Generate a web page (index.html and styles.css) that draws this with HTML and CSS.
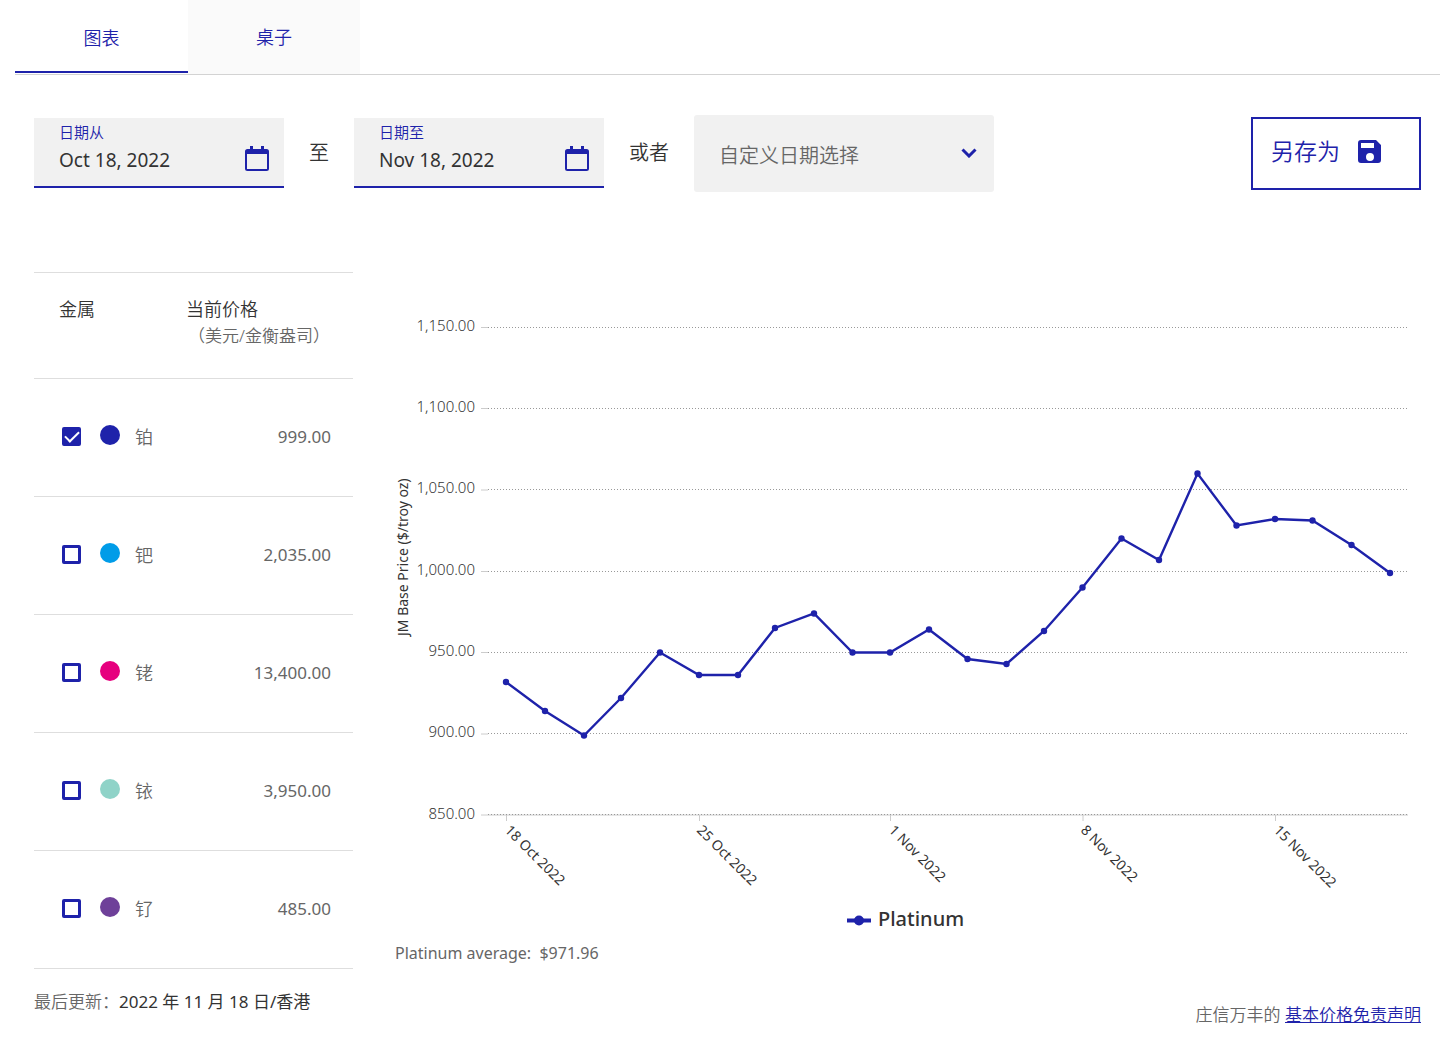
FILE: index.html
```html
<!DOCTYPE html>
<html lang="zh-CN">
<head>
<meta charset="utf-8">
<meta name="viewport" content="width=device-width, initial-scale=1">
<title>贵金属价格图表</title>
<link rel="stylesheet" href="styles.css">
</head>
<body>
<nav class="tabs">
  <button type="button" class="tab tab-active">图表</button>
  <button type="button" class="tab">桌子</button>
</nav>
<main class="page">
  <form class="filters">
    <div class="date-field">
      <div class="date-text">
        <label for="from">日期从</label>
        <input id="from" type="text" value="Oct 18, 2022">
      </div>
      <svg class="calendar" viewBox="0 0 24 26" aria-hidden="true"><path fill-rule="evenodd" d="M5 0h3v3h8V0h3v3h2.500q2.500 0 2.500 2.500v17q0 2.500-2.500 2.500h-19Q0 25 0 22.500v-17Q0 3 2.500 3H5zM2 8v15h20V8z"/></svg>
    </div>
    <span class="joiner">至</span>
    <div class="date-field">
      <div class="date-text">
        <label for="to">日期至</label>
        <input id="to" type="text" value="Nov 18, 2022">
      </div>
      <svg class="calendar" viewBox="0 0 24 26" aria-hidden="true"><path fill-rule="evenodd" d="M5 0h3v3h8V0h3v3h2.500q2.500 0 2.500 2.500v17q0 2.500-2.500 2.500h-19Q0 25 0 22.500v-17Q0 3 2.500 3H5zM2 8v15h20V8z"/></svg>
    </div>
    <span class="joiner">或者</span>
    <div class="range">
      <select class="range-select" aria-label="自定义日期选择">
        <option>自定义日期选择</option>
      </select>
      <svg class="chevron" viewBox="0 0 16 10" aria-hidden="true"><path d="M1.500 1.500l6.500 6.500 6.500-6.500"/></svg>
    </div>
    <button type="button" class="save">另存为
      <svg class="disk" viewBox="0 0 24 24" aria-hidden="true"><path fill-rule="evenodd" d="M3 1h15l5 5v15q0 3-3 3H3q-3 0-3-3V4q0-3 3-3zM3 4v5h13V4zM12 14a4 4 0 1 0 0 8a4 4 0 1 0 0-8z"/></svg>
    </button>
  </form>

  <div class="content">
    <section class="side">
      <table class="prices">
        <thead>
          <tr>
            <th class="metal-head">金属</th>
            <th class="price-head">当前价格<span class="unit">（美元/金衡盎司）</span></th>
          </tr>
        </thead>
        <tbody>
          <tr><td><label class="metal"><input type="checkbox" checked><span class="dot platinum"></span>铂</label></td><td class="price">999.00</td></tr>
          <tr><td><label class="metal"><input type="checkbox"><span class="dot palladium"></span>钯</label></td><td class="price">2,035.00</td></tr>
          <tr><td><label class="metal"><input type="checkbox"><span class="dot rhodium"></span>铑</label></td><td class="price">13,400.00</td></tr>
          <tr><td><label class="metal"><input type="checkbox"><span class="dot iridium"></span>铱</label></td><td class="price">3,950.00</td></tr>
          <tr><td><label class="metal"><input type="checkbox"><span class="dot ruthenium"></span>钌</label></td><td class="price">485.00</td></tr>
        </tbody>
      </table>
      <p class="updated">最后更新：<span class="updated-date">2022 年 11 月 18 日/香港</span></p>
    </section>

    <section class="chart-area">
      <svg class="chart" viewBox="0 0 1026 640" role="img" aria-label="Platinum">
        <defs>
          <marker id="point" markerUnits="userSpaceOnUse" markerWidth="8" markerHeight="8" refX="4" refY="4"><circle class="point" cx="4" cy="4" r="3.200"/></marker>
        </defs>
        <path class="tick" d="M86 27.500h7M86 108.500h7M86 190h7M86 271.500h7M86 352.500h7M86 434h7M86 515h927M111.500 515v6M304.500 515v6M495.500 515v6M688 515v6M880.500 515v6"/>
        <path class="grid" d="M93 27.500h920M93 108.500h920M93 189.500h920M93 271.500h920M93 352.500h920M93 433.500h920M93 514.500h920"/>
        <g class="y-labels">
          <text x="80" y="31">1,150.00</text>
          <text x="80" y="112">1,100.00</text>
          <text x="80" y="193">1,050.00</text>
          <text x="80" y="275">1,000.00</text>
          <text x="80" y="356">950.00</text>
          <text x="80" y="437">900.00</text>
          <text x="80" y="519">850.00</text>
        </g>
        <text class="axis-title" transform="translate(13 336) rotate(-90)">JM Base Price ($/troy oz)</text>
        <g class="x-labels">
          <text transform="translate(109 531) rotate(45)">18 Oct 2022</text>
          <text transform="translate(301 531) rotate(45)">25 Oct 2022</text>
          <text transform="translate(493 531) rotate(45)">1 Nov 2022</text>
          <text transform="translate(685 531) rotate(45)">8 Nov 2022</text>
          <text transform="translate(878 531) rotate(45)">15 Nov 2022</text>
        </g>
        <polyline class="series" points="111,382 150,411 189,435.500 226,398 265,352.500 304,375 343,375 380,328 419,313.500 457.500,352.500 495,352.500 534,329.500 572.500,359 611.500,364 649,331 687.500,287.500 726.500,238.500 764,260 802.500,173.500 841.500,225.500 880,219 917.500,220.500 956.500,245 995,273"/>
        <path class="legend-line" d="M452 620.500h24"/>
        <circle class="point" cx="464" cy="620.500" r="5"/>
        <text class="legend" x="483" y="626">Platinum</text>
      </svg>
      <p class="average">Platinum average:&nbsp; $971.96</p>
      <p class="disclaimer">庄信万丰的 <a href="#">基本价格免责声明</a></p>
    </section>
  </div>
</main>
</body>
</html>
```
FILE: styles.css
```css
:root {
  --blue: #1e22aa;
  --ink: #333;
  --grey: #666;
  --field: #f1f1f1;
  --rule: #dedede;
}

* {
  box-sizing: border-box;
}

body {
  margin: 0;
  background: #fff;
  color: var(--grey);
  font: 350 18px/26px "Noto Sans", "Noto Sans CJK SC", sans-serif;
}

button,
input,
select {
  font: inherit;
}

p {
  margin: 0;
}

.tabs {
  display: flex;
  margin: 0 4px 0 15px;
  border-bottom: 1px solid #d3d3d3;
}

.tab {
  width: 172px;
  height: 74px;
  padding: 0;
  border: 0;
  background: #fafafa;
  color: var(--blue);
  cursor: pointer;
}

.tab-active {
  width: 173px;
  height: 73px;
  padding-top: 4px;
  border-bottom: 2px solid var(--blue);
  background: #fff;
}

.page {
  padding: 40px 23px 12px 34px;
}

.filters {
  display: flex;
  align-items: center;
}

.date-field {
  display: flex;
  justify-content: space-between;
  width: 250px;
  height: 70px;
  margin-bottom: 2px;
  padding: 2px 15px 0 25px;
  border-bottom: 2px solid var(--blue);
  background: var(--field);
}

.date-text {
  display: flex;
  flex-direction: column;
}

.date-text label {
  color: var(--blue);
  font-size: 15px;
  line-height: 24px;
}

.date-text input {
  width: 160px;
  height: 32px;
  padding: 0;
  border: 0;
  background: none;
  color: var(--ink);
  font-size: 19px;
  font-weight: 400;
}

.calendar {
  width: 24px;
  height: 26px;
  margin-top: 26px;
  fill: var(--blue);
}

.joiner {
  padding: 0 25px 2px;
  color: var(--ink);
  font-size: 20px;
}

.range {
  position: relative;
}

.range-select {
  width: 300px;
  height: 77px;
  padding: 4px 25px 0;
  border: 0;
  border-radius: 3px;
  appearance: none;
  background: var(--field);
  color: var(--grey);
  font-size: 20px;
}

.chevron {
  position: absolute;
  top: 33px;
  right: 17px;
  width: 16px;
  height: 10px;
  fill: none;
  stroke: var(--blue);
  stroke-width: 3;
  pointer-events: none;
}

.save {
  display: flex;
  align-items: center;
  gap: 18px;
  width: 170px;
  height: 73px;
  margin-left: auto;
  padding: 0 18px 6px;
  border: 2px solid var(--blue);
  background: #fff;
  color: var(--blue);
  font-size: 23px;
  cursor: pointer;
}

.disk {
  width: 24px;
  height: 24px;
  fill: var(--blue);
}

.content {
  display: grid;
  grid-template-columns: 319px minmax(0, 1fr);
  gap: 42px;
  margin-top: 80px;
}

.prices {
  width: 100%;
  border-collapse: collapse;
}

.prices tr {
  height: 118px;
  border-bottom: 1px solid var(--rule);
}

.prices thead tr {
  height: 106px;
  border-top: 1px solid var(--rule);
}

.prices th {
  padding: 23px 0 0;
  color: var(--ink);
  font-weight: inherit;
  text-align: left;
  vertical-align: top;
}

.prices td {
  padding: 0 0 2px;
}

.prices .metal-head {
  width: 152px;
  padding-left: 25px;
}

.unit {
  display: block;
  padding-left: 2px;
  color: var(--grey);
  font-size: 17px;
  line-height: 28px;
}

.metal {
  display: flex;
  align-items: center;
  padding-left: 28px;
}

.metal input {
  display: grid;
  place-content: center;
  width: 19px;
  height: 19px;
  margin: 0 19px 0 0;
  border: 3px solid var(--blue);
  border-radius: 2px;
  appearance: none;
}

.metal input:checked {
  background: var(--blue);
}

.metal input:checked::before {
  content: "";
  width: 12px;
  height: 6px;
  border: solid #fff;
  border-width: 0 0 2px 2px;
  transform: translateY(-2px) rotate(-45deg);
}

.dot {
  width: 20px;
  height: 20px;
  margin: 0 15px 4px 0;
  border-radius: 50%;
}

.platinum { background: #1e22aa; }
.palladium { background: #009ce8; }
.rhodium { background: #e6007e; }
.iridium { background: #8fd3c8; }
.ruthenium { background: #6e4099; }

.prices .price {
  padding-right: 22px;
  font-size: 17px;
  font-weight: 400;
  text-align: right;
}

.updated {
  margin-top: 20px;
  font-size: 17px;
}

.updated-date {
  color: var(--ink);
  font-weight: 380;
}

.chart-area {
  padding-top: 28px;
}

.chart {
  display: block;
  width: 100%;
  overflow: visible;
  fill: var(--ink);
  font-size: 14px;
  font-weight: 400;
}

.tick {
  fill: none;
  stroke: #ccc;
}

.grid {
  fill: none;
  stroke: #999;
  stroke-dasharray: 1 2;
}

.y-labels {
  font-size: 15px;
  font-weight: 350;
  text-anchor: end;
}

.series {
  fill: none;
  stroke: var(--blue);
  stroke-width: 2.4;
  marker: url(#point);
}

.point {
  fill: var(--blue);
}

.legend-line {
  stroke: var(--blue);
  stroke-width: 4;
}

.legend {
  font-size: 20px;
  font-weight: 500;
}

.average {
  font-size: 16px;
  font-weight: 400;
}

.disclaimer {
  margin-top: 36px;
  font-size: 17px;
  text-align: right;
}

.disclaimer a {
  color: var(--blue);
}
```
